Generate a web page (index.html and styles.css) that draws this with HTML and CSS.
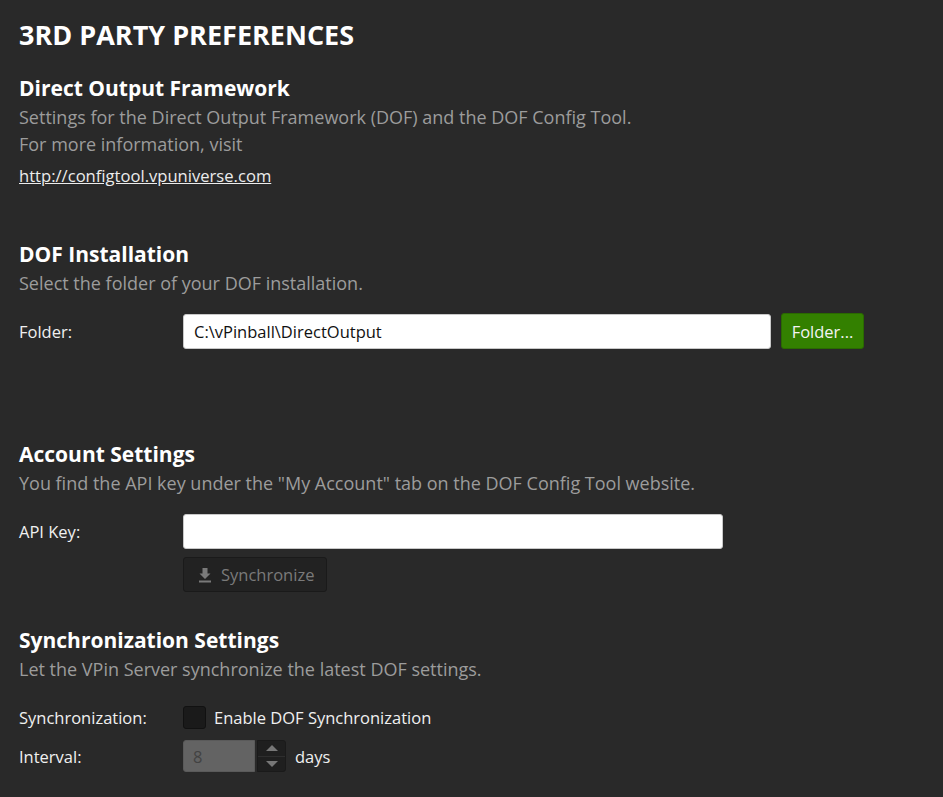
FILE: index.html
```html
<!DOCTYPE html>
<html>
<head>
<meta charset="utf-8">
<link rel="stylesheet" href="styles.css">
</head>
<body>
<div class="page">
  <h1 class="title">3RD PARTY PREFERENCES</h1>

  <section class="sec sec-dof">
    <h2 class="heading">Direct Output Framework</h2>
    <p class="desc">Settings for the Direct Output Framework (DOF) and the DOF Config Tool.</p>
    <p class="desc desc-next">For more information, visit</p>
    <p class="link-line"><a class="link" href="#">http://configtool.vpuniverse.com</a></p>
  </section>

  <section class="sec sec-install">
    <h2 class="heading">DOF Installation</h2>
    <p class="desc">Select the folder of your DOF installation.</p>
    <div class="row row-folder">
      <span class="label">Folder:</span>
      <div class="field folder-field">C:\vPinball\DirectOutput</div>
      <button class="btn-green">Folder...</button>
    </div>
  </section>

  <section class="sec sec-account">
    <h2 class="heading">Account Settings</h2>
    <p class="desc">You find the API key under the "My Account" tab on the DOF Config Tool website.</p>
    <div class="row row-api">
      <span class="label">API Key:</span>
      <div class="field api-field"></div>
    </div>
    <div class="row row-sync-btn">
      <span class="label"></span>
      <button class="btn-dark">
        <svg class="dl-icon" width="16" height="16" viewBox="0 0 16 16"><path d="M5.5 1h5v5.5h3l-5.5 5.5l-5.5-5.5h3z" fill="#7a7a7a"/><rect x="2" y="13.5" width="12" height="2" fill="#7a7a7a"/></svg>
        <span>Synchronize</span>
      </button>
    </div>
  </section>

  <section class="sec sec-syncset">
    <h2 class="heading">Synchronization Settings</h2>
    <p class="desc">Let the VPin Server synchronize the latest DOF settings.</p>
    <div class="row row-check">
      <span class="label">Synchronization:</span>
      <span class="checkbox"></span>
      <span class="check-label">Enable DOF Synchronization</span>
    </div>
    <div class="row row-interval">
      <span class="label">Interval:</span>
      <div class="spinner">
        <div class="spin-field">8</div>
        <div class="spin-btns">
          <span class="spin-btn"><span class="arrow-up"></span></span>
          <span class="spin-btn"><span class="arrow-down"></span></span>
        </div>
      </div>
      <span class="unit">days</span>
    </div>
  </section>
</div>
</body>
</html>
```

FILE: styles.css
```css
html, body {
  margin: 0;
  padding: 0;
  background: #292929;
}
body {
  font-family: "Open Sans", "Noto Sans", sans-serif;
  color: #f2f2f2;
}
.page {
  padding: 18px 19px 0 19px;
  display: flex;
  flex-direction: column;
}
.title {
  margin: 0;
  font-size: 27px;
  line-height: 34px;
  font-weight: 700;
  color: #ffffff;
}
.sec {
  display: flex;
  flex-direction: column;
}
.sec-dof { margin-top: 21px; }
.sec-install { margin-top: 50px; }
.sec-account { margin-top: 90px; }
.sec-syncset { margin-top: 33px; }
.heading {
  margin: 0;
  font-size: 21px;
  line-height: 30px;
  font-weight: 700;
  color: #ffffff;
}
.desc {
  margin: 1px 0 0 0;
  font-size: 18px;
  line-height: 27px;
  color: #9c9c9c;
}
.desc-next { margin-top: 0; }
.link-line {
  margin: 4px 0 0 0;
  font-size: 16.6px;
  line-height: 27px;
}
.link {
  color: #ececec;
  text-decoration: underline;
}
.row {
  display: flex;
  align-items: center;
}
.label {
  width: 164px;
  flex: none;
  font-size: 16.5px;
  color: #f0f0f0;
}
.row-folder { margin-top: 16px; height: 36px; }
.field {
  background: #ffffff;
  border-radius: 3px;
  box-sizing: border-box;
  height: 35px;
  border: 1px solid #c8c8c8;
  color: #111;
  font-size: 16.5px;
  padding: 0 10px;
  display: flex;
  align-items: center;
}
.folder-field { width: 588px; }
.btn-green {
  margin-left: 10px;
  height: 36px;
  width: 83px;
  box-sizing: border-box;
  background: #338000;
  border: 1px solid #2a6a00;
  border-radius: 3px;
  color: #f4f4f4;
  font-family: inherit;
  font-size: 16.5px;
  padding: 0;
}
.row-api { margin-top: 16px; height: 36px; }
.api-field { width: 540px; }
.row-sync-btn { margin-top: 8px; }
.btn-dark {
  height: 35px;
  width: 144px;
  box-sizing: border-box;
  background: #222222;
  border: 1px solid #1a1a1a;
  border-radius: 3px;
  color: #7a7a7a;
  font-family: inherit;
  font-size: 16.5px;
  padding: 0 0 0 13px;
  display: flex;
  align-items: center;
  gap: 8px;
}
.row-check { margin-top: 21px; height: 26px; }
.checkbox {
  width: 23px;
  height: 23px;
  box-sizing: border-box;
  background: #1a1a1a;
  border: 1px solid #111;
  border-radius: 3px;
  flex: none;
}
.check-label {
  margin-left: 8px;
  font-size: 16.5px;
  color: #f0f0f0;
}
.row-interval { margin-top: 10px; }
.spinner {
  display: flex;
  gap: 2px;
  height: 32px;
}
.spin-field {
  width: 72px;
  box-sizing: border-box;
  background: #636363;
  border: 1px solid #5a5a5a;
  border-radius: 3px 0 0 3px;
  color: #424242;
  font-size: 16.5px;
  padding-left: 9px;
  display: flex;
  align-items: center;
}
.spin-btns {
  width: 29px;
  display: flex;
  flex-direction: column;
  background: #1f1f1f;
  border: 1px solid #1a1a1a;
  border-radius: 0 3px 3px 0;
  box-sizing: border-box;
}
.spin-btn {
  flex: 1;
  display: flex;
  align-items: center;
  justify-content: center;
}
.spin-btn + .spin-btn { border-top: 1px solid #2e2e2e; }
.arrow-up {
  width: 0; height: 0;
  border-left: 6px solid transparent;
  border-right: 6px solid transparent;
  border-bottom: 6px solid #777;
}
.arrow-down {
  width: 0; height: 0;
  border-left: 6px solid transparent;
  border-right: 6px solid transparent;
  border-top: 6px solid #777;
}
.unit {
  margin-left: 9px;
  font-size: 16.5px;
  color: #f0f0f0;
}
```
